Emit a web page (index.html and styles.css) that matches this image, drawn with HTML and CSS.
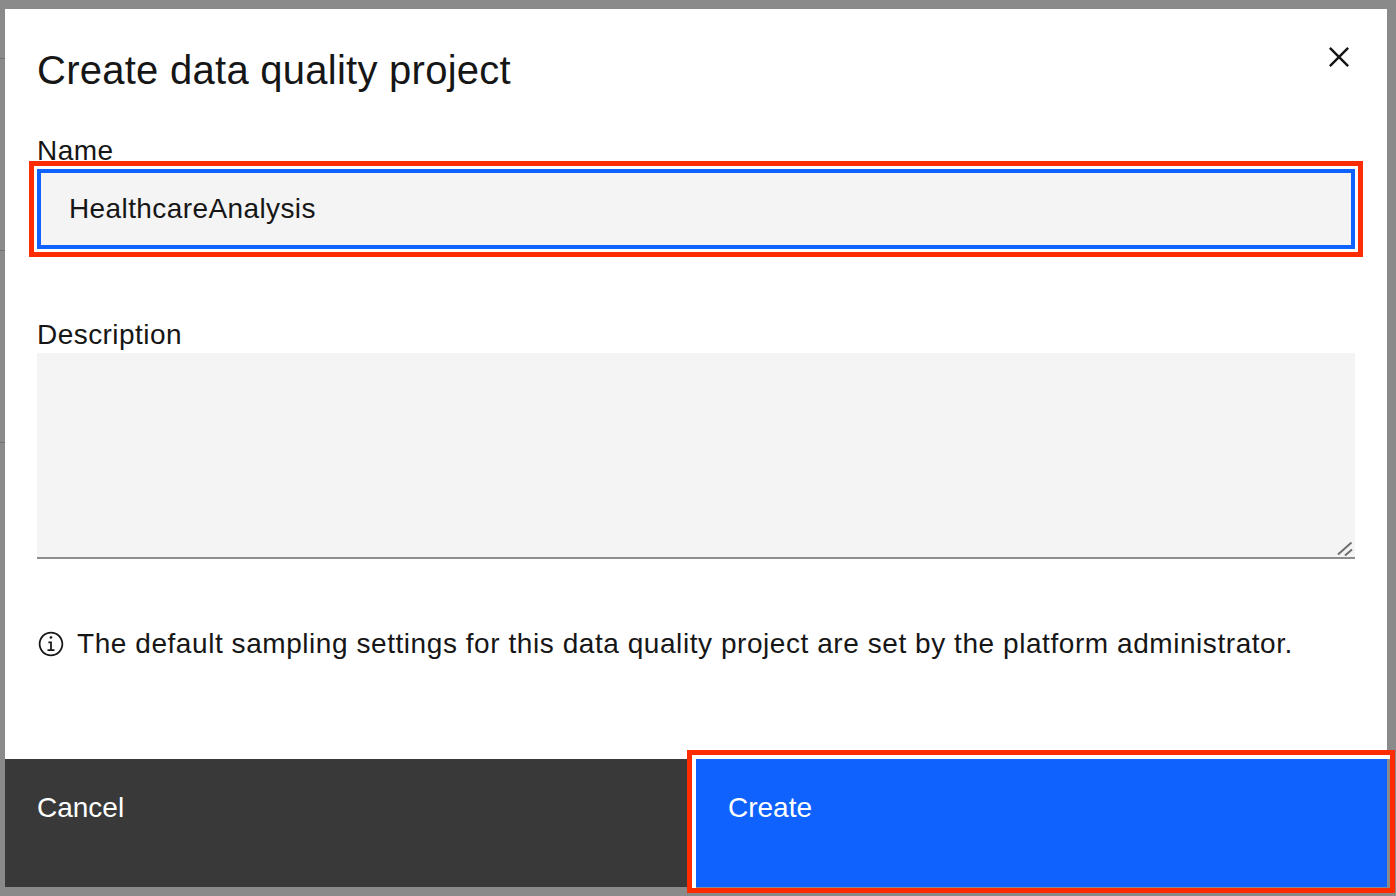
FILE: index.html
```html
<!DOCTYPE html>
<html lang="en">
<head>
<meta charset="utf-8">
<title>Create data quality project</title>
<link rel="stylesheet" href="styles.css">
</head>
<body>
<div class="overlay">
  <div class="modal" role="dialog" aria-labelledby="modal-title">
    <header class="modal-header">
      <h2 id="modal-title" class="modal-title">Create data quality project</h2>
      <button class="close-btn" type="button" aria-label="Close">
        <svg class="close-icon" viewBox="0 0 32 32" width="40" height="40" aria-hidden="true"><path d="M24 9.4L22.6 8 16 14.6 9.4 8 8 9.4 14.6 16 8 22.6 9.4 24 16 17.4 22.6 24 24 22.6 17.4 16 24 9.4z"/></svg>
      </button>
    </header>
    <div class="modal-body">
      <div class="field field-name">
        <label class="label" for="name">Name</label>
        <div class="annotated">
          <input id="name" class="text-input" type="text" value="HealthcareAnalysis">
        </div>
      </div>
      <div class="field field-desc">
        <label class="label" for="desc">Description</label>
        <div class="textarea-wrap">
          <textarea id="desc" class="textarea"></textarea>
          <svg class="grip" viewBox="0 0 16 16" width="16" height="16" aria-hidden="true"><path d="M1 14.5 L14.5 2.5 M8 15.5 L15 9.5"/></svg>
        </div>
      </div>
      <p class="notice">
        <svg class="info-icon" viewBox="0 0 16 16" width="28" height="28" aria-hidden="true"><path d="M8.5 11L8.5 6.5 6.5 6.5 6.5 7.5 7.5 7.5 7.5 11 6 11 6 12 10 12 10 11z"/><path d="M8 3.5c-.4 0-.8.3-.8.8S7.6 5 8 5c.4 0 .8-.3.8-.8S8.4 3.5 8 3.5z"/><path d="M8 15c-3.9 0-7-3.1-7-7s3.1-7 7-7 7 3.1 7 7-3.1 7-7 7zM8 2C4.7 2 2 4.7 2 8s2.7 6 6 6 6-2.7 6-6-2.7-6-6-6z"/></svg>
        <span>The default sampling settings for this data quality project are set by the platform administrator.</span>
      </p>
    </div>
    <footer class="modal-footer">
      <button class="btn btn-secondary" type="button">Cancel</button>
      <button class="btn btn-primary" type="button">Create</button>
    </footer>
  </div>
</div>
</body>
</html>
```
FILE: styles.css
```css
* {
  box-sizing: border-box;
  margin: 0;
  padding: 0;
}

html,
body {
  height: 100%;
}

body {
  font-family: "Liberation Sans", Arial, sans-serif;
  color: #161616;
  overflow: hidden;
  background:
    linear-gradient(#727272, #727272) 0 58px / 5px 1px no-repeat,
    linear-gradient(#727272, #727272) 0 250px / 5px 1px no-repeat,
    linear-gradient(#727272, #727272) 0 442px / 5px 1px no-repeat,
    #8a8a8a;
}

.overlay {
  height: 896px;
  padding: 9px 9px 9px 5px;
  display: flex;
}

.modal {
  flex: 1;
  background: #ffffff;
  display: flex;
  flex-direction: column;
}

/* header */
.modal-header {
  display: flex;
  justify-content: space-between;
  align-items: flex-start;
  padding-left: 32px;
}

.modal-title {
  font-size: 40px;
  font-weight: 400;
  line-height: 56px;
  letter-spacing: 0.26px;
  padding-top: 33px;
  color: #161616;
}

.close-btn {
  width: 96px;
  height: 96px;
  border: 0;
  background: none;
  display: flex;
  align-items: center;
  justify-content: center;
  cursor: pointer;
}

.close-icon {
  fill: #161616;
  display: block;
}

/* body */
.modal-body {
  padding: 0 32px;
  display: flex;
  flex-direction: column;
}

.field {
  display: flex;
  flex-direction: column;
}

.field-name {
  margin-top: 30px;
}

.field-desc {
  margin-top: 70px;
}

.label {
  font-size: 28px;
  line-height: 32px;
  letter-spacing: 0.45px;
  margin-bottom: 2px;
  color: #161616;
}

.annotated {
  outline: 5px solid #fe2c02;
  outline-offset: 3px;
}

.text-input {
  display: block;
  width: 100%;
  height: 80px;
  border: 0;
  background: #f4f4f4;
  box-shadow: inset 0 0 0 4px #0f62fe;
  padding: 0 32px;
  font-family: inherit;
  font-size: 28px;
  letter-spacing: 0.4px;
  color: #161616;
  outline: none;
}

.textarea-wrap {
  position: relative;
}

.textarea {
  display: block;
  width: 100%;
  height: 206px;
  border: 0;
  border-bottom: 2px solid #8d8d8d;
  background: #f4f4f4;
  padding: 22px 32px;
  font-family: inherit;
  font-size: 28px;
  resize: none;
  outline: none;
}

.grip {
  position: absolute;
  right: 2px;
  bottom: 3px;
  fill: none;
  stroke: #6f6f6f;
  stroke-width: 2;
}

.notice {
  margin-top: 65px;
  display: flex;
  align-items: center;
  gap: 12px;
  font-size: 28px;
  line-height: 40px;
  letter-spacing: 0.56px;
  color: #161616;
}

.info-icon {
  flex: none;
  fill: #161616;
  display: block;
}

/* footer */
.modal-footer {
  margin-top: auto;
  height: 128px;
  display: flex;
}

.btn {
  flex: 1;
  border: 0;
  text-align: left;
  font-family: inherit;
  font-size: 28px;
  line-height: 36px;
  padding: 31px 32px;
  display: flex;
  align-items: flex-start;
  cursor: pointer;
  color: #ffffff;
}

.btn-secondary {
  background: #393939;
}

.btn-primary {
  background: #0f62fe;
  position: relative;
}

.btn-primary::after {
  content: "";
  position: absolute;
  left: -9px;
  top: -9px;
  right: -8px;
  bottom: -6px;
  border: 5px solid #fe2c02;
  box-shadow: inset 4px 4px 0 #ffffff;
  pointer-events: none;
}
```
